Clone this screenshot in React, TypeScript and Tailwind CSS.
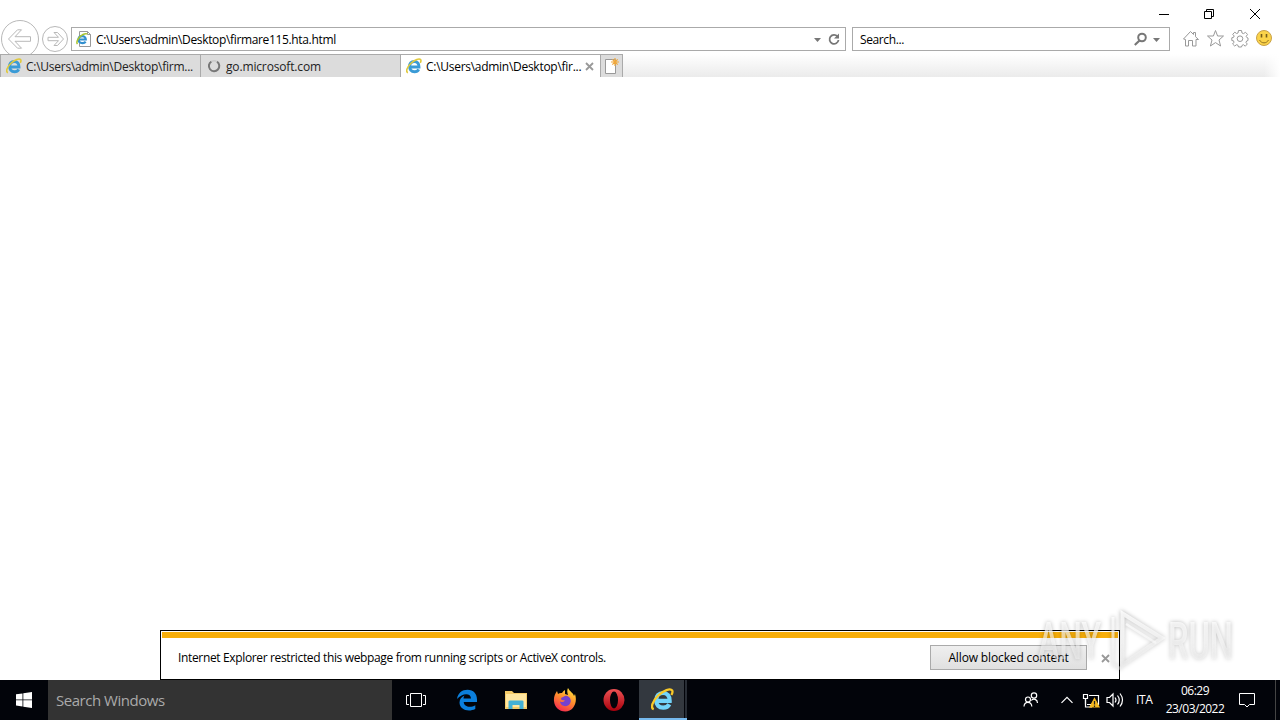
function IeLogo({ size = 16, light = false }: { size?: number; light?: boolean }) {
  return (
    <svg width={size} height={size} viewBox="0 0 16 16" fill="none" className="shrink-0">
      <path d="M3.900 9H13C13.100 5.600 11.300 3.500 8.400 3.500C5.500 3.500 3.600 5.500 3.600 8.600C3.600 11.800 5.500 13.700 8.500 13.700C10.500 13.700 12 12.800 12.700 11.300" stroke={light ? '#72d4fa' : '#3a9bd6'} strokeWidth="2.9" />
      <path d="M1.900 14.800C-.6 13.800 1.100 9 5 5.200C8.700 1.600 13.500-.1 14.700 1.700C15.200 2.500 14.900 3.700 14.200 4.900" stroke={light ? '#f9c928' : '#e0c93c'} strokeWidth="1.6" />
    </svg>
  );
}

function WindowControls() {
  return (
    <div className="flex h-[27px] justify-end">
      <svg width="140" height="27" viewBox="0 0 140 27" fill="none" stroke="#000" strokeWidth="1">
        <path d="M19 14.5H29" />
        <path d="M64.5 11.5H71.5V18.5H64.5ZM66.5 11V9.5H73.5V16.5H72" />
        <path d="M110 9L120 19M120 9L110 19" />
      </svg>
    </div>
  );
}

function AddressRow() {
  return (
    <div className="flex h-[27px] items-start">
      <svg width="71" height="34" viewBox="0 20 71 34" fill="none" stroke="#b8b8b8" className="-mt-[7px] shrink-0">
        <circle cx="20" cy="39" r="18.5" />
        <path d="M8.500 39L17.500 29.800H21.500L15 36.700H30.500V41.300H15L21.500 48.200H17.500Z" />
        <circle cx="55" cy="39" r="12.5" />
        <path d="M63.500 39L57.500 32.500H54L58.500 37.300H48V40.700H58.500L54 45.500H57.500Z" />
      </svg>
      <div className="flex h-[24px] w-[775px] shrink-0 items-center border border-[#aaa] bg-white pl-[4px]">
        <svg width="16" height="18" viewBox="0 0 16 18" fill="none" className="mr-[4px] shrink-0">
          <path d="M3.500 1.500H11.500L14.500 4.500V16.500H3.500Z" fill="#fff" stroke="#999" />
          <path d="M11.500 1.500V4.500H14.500" stroke="#999" />
          <path d="M2.500 9.500H9.800C9.800 5 2.700 5 2.500 9.500C2.500 13.800 8 13.800 9.700 11.800" stroke="#3390cf" strokeWidth="2.200" />
          <path d="M1.500 14C-.5 12 3 6.500 7 4.500C9 3.500 10.800 3.300 11 4.500" stroke="#a9c32f" strokeWidth="1.500" />
        </svg>
        <span className="flex-1 pt-[2px] text-[12px] tracking-[-0.345px]">C:\Users\admin\Desktop\firmare115.hta.html</span>
        <svg width="32" height="22" viewBox="813 28 32 22" fill="none">
          <path d="M814 38H821L817.500 42Z" fill="#777" />
          <path d="M837.500 36.500A4.500 4.500 0 1 0 838.500 40" stroke="#777" strokeWidth="1.800" />
          <path d="M839 33.500V38.500H834Z" fill="#777" />
        </svg>
      </div>
      <div className="ml-[6px] flex h-[24px] w-[318px] shrink-0 items-center border border-[#aaa] bg-white pl-[7px]">
        <span className="flex-1 pt-[2px] text-[12px] tracking-[-0.38px]">Search...</span>
        <svg width="36" height="22" viewBox="1133 28 36 22" fill="none">
          <circle cx="1142" cy="37.500" r="3.800" stroke="#777" strokeWidth="2" />
          <path d="M1139.500 40.500L1134.800 45" stroke="#777" strokeWidth="2.200" />
          <path d="M1153 38H1160L1156.500 42Z" fill="#777" />
        </svg>
      </div>
      <svg width="110" height="24" viewBox="1170 27 110 24" fill="none" stroke="#999" className="shrink-0">
        <path d="M1183.500 39L1190.500 31.500L1193.500 34.500V32.500H1195.500V36.700L1198.500 39.500H1196V46H1192.500V40.500H1188.500V46H1185.500V39.500Z" />
        <path d="M1215.500 30.500L1217.600 36H1223.500L1219 40L1220.600 46L1215.500 42.600L1210.400 46L1212 40L1207.500 36H1213.400Z" />
        <path d="M1238.500 30.500H1241.500L1242 33L1243.500 33.600L1245.500 32.300L1247.500 34.400L1246.200 36.400L1246.800 37.500L1248 38V40.500L1246.600 41L1246 42.500L1247.300 44L1245.300 46.200L1243.400 44.700L1242 45.400L1241.500 47H1238.500L1238 45.300L1236.600 44.700L1234.700 46L1232.600 44L1234 42.200L1233.500 40.800L1231.800 40.500V37.800L1233.600 37.300L1234.200 36L1232.700 34.300L1234.800 32.200L1236.600 33.500L1238 33Z" />
        <circle cx="1240" cy="38.700" r="2.800" />
        <circle cx="1264" cy="38" r="7.500" fill="#fbd34a" stroke="#c9a24a" />
        <path d="M1261.500 34V37.500M1266.500 34V37.500" stroke="#755c18" strokeWidth="1.600" />
        <path d="M1259.500 40C1261.500 43.800 1266.500 43.800 1268.500 40" stroke="#94731f" />
      </svg>
    </div>
  );
}

function TabBar() {
  return (
    <div className="flex h-[23px] bg-gradient-to-b from-white to-[#ebebeb] text-[12px] text-[#222]">
      <div className="flex w-[201px] items-center border border-b-0 border-[#aaa] bg-[#dcdcdc] pl-[5px]">
        <IeLogo />
        <span className="ml-[4px] whitespace-nowrap pt-[2px] tracking-[-0.25px]">C:\Users\admin\Desktop\firm...</span>
      </div>
      <div className="flex w-[199px] items-center border-t border-[#aaa] bg-[#dcdcdc] pl-[5px]">
        <svg width="15" height="15" viewBox="0 0 15 15" fill="none">
          <path d="M5.500 2.500A5.200 5.200 0 1 0 11 2.700" stroke="#777" strokeWidth="2" />
          <path d="M5.500 2.500A5.200 5.200 0 0 1 11 2.700" stroke="#cacaca" strokeWidth="1.500" />
        </svg>
        <span className="ml-[5px] pt-[2px] tracking-[-0.15px]">go.microsoft.com</span>
      </div>
      <div className="flex w-[201px] items-center border border-b-0 border-[#aaa] bg-white pl-[5px] text-black">
        <IeLogo />
        <span className="ml-[4px] w-[159px] whitespace-nowrap pt-[2px] tracking-[-0.28px]">C:\Users\admin\Desktop\fir...</span>
        <svg width="9" height="9" viewBox="0 0 9 9" stroke="#999" strokeWidth="1.800">
          <path d="M1 1L8 8M8 1L1 8" />
        </svg>
      </div>
      <div className="flex w-[22px] items-center border border-b-0 border-l-0 border-[#aaa] bg-[#dcdcdc] pl-[3px]">
        <svg width="16" height="18" viewBox="0 0 16 18" fill="none">
          <path d="M1.500 2.500H11.500V16.500H1.500Z" fill="#fff" stroke="#999" />
          <path d="M11 1V9M7 5H15M8.300 2.300L13.700 7.700M13.700 2.300L8.300 7.700" stroke="#f0a83c" strokeWidth="1.200" />
        </svg>
      </div>
      <div className="ml-auto w-4 bg-gradient-to-r from-transparent to-white" />
    </div>
  );
}

function NotificationBar() {
  return (
    <div className="mx-auto flex h-[50px] w-[960px] flex-col border border-black bg-white pt-px">
      <div className="mx-px h-[6px] shrink-0 bg-[#f7ae0a]" />
      <div className="flex flex-1 items-center pl-[17px] text-[12px]">
        <span className="w-[752px] pb-px tracking-[-0.35px]">Internet Explorer restricted this webpage from running scripts or ActiveX controls.</span>
        <button className="-mt-[3px] h-[25px] w-[157px] border border-[#aaa] bg-gradient-to-b from-[#efefef] to-[#e0e0e0] pt-[2px] tracking-[-0.14px]">Allow blocked content</button>
        <svg width="9" height="9" viewBox="0 0 9 9" stroke="#999" strokeWidth="1.800" className="ml-[14px]">
          <path d="M1 1L8 8M8 1L1 8" />
        </svg>
      </div>
    </div>
  );
}

function Watermark() {
  return (
    <svg width="215" height="76" viewBox="1030 604 215 76" className="absolute left-[1030px] top-[604px]" style={{ filter: 'drop-shadow(0 0 2px rgba(0,0,0,.38))' }}>
      <defs>
        <linearGradient id="fade" gradientUnits="userSpaceOnUse" x1="0" y1="610" x2="0" y2="672">
          <stop stopColor="#fff" stopOpacity=".85" />
          <stop offset=".5" stopColor="#fff" stopOpacity=".55" />
          <stop offset="1" stopColor="#eee" stopOpacity=".4" />
        </linearGradient>
      </defs>
      <g fill="url(#fade)" fontSize="51" fontWeight="500" fontFamily="Roboto">
        <text x="1038" y="659" textLength="63" lengthAdjust="spacingAndGlyphs">ANY</text>
        <text x="1168" y="659" textLength="65" lengthAdjust="spacingAndGlyphs">RUN</text>
      </g>
      <g fill="none" stroke="url(#fade)" strokeWidth="4">
        <path d="M1122.500 613.500L1162 638L1122.500 665Z" />
        <path d="M1113 617V664L1121 669" strokeWidth="3" />
        <path d="M1126 624L1156 643" strokeWidth="2.500" />
      </g>
    </svg>
  );
}

function Taskbar() {
  return (
    <footer className="flex h-[40px] bg-[#02040a] text-white">
      <div className="flex w-[48px] items-center justify-center">
        <svg width="16" height="16" viewBox="0 0 16 16" fill="#fff">
          <path d="M0 2.300L6.500 1.400V7.500H0ZM7.300 1.300L16 0V7.500H7.300ZM0 8.300H6.500V14.500L0 13.600ZM7.300 8.300H16V16L7.300 14.700Z" />
        </svg>
      </div>
      <div className="flex w-[344px] items-center bg-[#333] pl-[8px] text-[15px] text-[#aaa]">
        <span className="tracking-[-0.47px]">Search Windows</span>
      </div>
      <div className="flex w-[49px] items-center pl-[14px]">
        <svg width="20" height="14" viewBox="0 0 20 14" fill="none" stroke="#fff">
          <path d="M4.500.5H15.500V13.500H4.500ZM3 2.500H.5V11.500H3M17 2.500H19.500V11.500H17" />
        </svg>
      </div>
      <div className="flex w-[51px] items-center justify-center">
        <svg width="22" height="22" viewBox="0 0 22 22">
          <path d="M1 10C2 4 6 .8 11.500.8C17.500.8 21 5 21 10.500V13H7.700C8 18 14.500 19 19.300 16.200V20C12 23.500 3.500 20.500 3.500 13.500C3.500 10.300 5.500 7.800 8.500 6.600C7.800 7.500 7.500 8.400 7.500 9.500H15C15 3.800 6.500 3.500 1 10Z" fill="#0b7fdc" />
        </svg>
      </div>
      <div className="flex w-[47px] items-center justify-center">
        <svg width="22" height="20" viewBox="0 0 22 20">
          <path d="M0 1H7L9 3H22V19H0Z" fill="#f5cb68" />
          <path d="M1 4H21V17H1Z" fill="#ffe6a0" />
          <path d="M3.500 19V11.500Q3.500 10.500 5 10.500H17Q18.500 10.500 18.500 11.500V19H14.500V15H7.500V19Z" fill="#44b1d5" />
        </svg>
      </div>
      <div className="flex w-[50px] items-center justify-center pl-px">
        <svg width="24" height="24" viewBox="0 0 24 24">
          <defs>
            <linearGradient id="fox" x1=".8" y1="0" x2=".3" y2="1">
              <stop stopColor="#ffe83f" />
              <stop offset=".45" stopColor="#ff932c" />
              <stop offset="1" stopColor="#f4274e" />
            </linearGradient>
          </defs>
          <path d="M1 13C.6 9 2 6 4 3L5 6Q6.500 4.700 9 5Q10 3 12 2V6L15 7Q13.500 3 15 0C17 4 20 4.500 21 8L22 6C25 15 20 23.500 12.300 23.500C6 23.500 1.500 19 1 13Z" fill="url(#fox)" />
          <path d="M8 10L11 8.500Q13 7 16 9Q19 12 17 15.500C14.500 20 7.500 18.500 7 13.500Q10 15 12 12.500L8.500 12Z" fill="#7441ce" />
        </svg>
      </div>
      <div className="flex w-[50px] items-center justify-center pr-px">
        <svg width="22" height="22" viewBox="0 0 22 22">
          <defs>
            <linearGradient id="opera" x2="0" y2="1">
              <stop stopColor="#ed5254" />
              <stop offset="1" stopColor="#a7000c" />
            </linearGradient>
          </defs>
          <ellipse cx="11" cy="11" rx="10.500" ry="11" fill="url(#opera)" />
          <ellipse cx="11" cy="11" rx="4" ry="8.500" fill="#02040a" />
        </svg>
      </div>
      <div className="flex w-[48px] border-b-2 border-[#76b9ed]">
        <div className="flex w-[45px] items-center justify-center bg-[#33383f] pl-[2px]">
          <IeLogo size={23} light />
        </div>
        <div className="ml-px flex-1 bg-[#282d35]" />
      </div>
      <svg width="126" height="40" viewBox="1010 680 126 40" fill="none" stroke="#fff" strokeWidth="1.200" className="ml-auto">
        <circle cx="1034" cy="695.500" r="2.700" />
        <circle cx="1028" cy="699.500" r="2.500" />
        <path d="M1024 706.500C1024.300 701 1031.500 701 1031.800 706.500M1031.300 700.500C1033.500 697.700 1037.500 699.500 1037.500 703" />
        <path d="M1061.500 702.800L1067 697.300L1072.500 702.800" />
        <path d="M1089 695.500H1098.500V704.500H1087M1085.500 704.500V698" />
        <path d="M1083.500 694.500H1087.500V698.500H1083.500ZM1085.500 698V707H1092" />
        <path d="M1094.500 698.500L1099 707H1090Z" fill="#f5b921" stroke="#f5b921" />
        <path d="M1094.500 701V704.500M1094.500 705.500V707" stroke="#222" />
        <path d="M1107 697.500H1109.500L1113 694V706L1109.500 702.500H1107ZM1115 697.500Q1117 700 1115 702.500M1117.500 695.500Q1121 700 1117.500 704.500M1120 693.500Q1125 700 1120 706.500" />
      </svg>
      <span className="w-[26px] text-[12px] leading-[40px] tracking-[-0.3px]">ITA</span>
      <div className="w-[66px] whitespace-nowrap pt-[2px] text-center text-[12px] leading-[18px] tracking-[-0.5px]">
        <div>06:29</div>
        <div>23/03/2022</div>
      </div>
      <div className="flex w-[48px] items-center border-r border-[#444] pl-[11px]">
        <svg width="17" height="17" viewBox="0 0 17 17" fill="none" stroke="#fff">
          <path d="M.5 1.500H15.500V12.500H10.500L8 15L5.500 12.500H.5Z" />
        </svg>
      </div>
      <div className="w-[4px]" />
    </footer>
  );
}

export default function App() {
  return (
    <div className="relative flex h-[720px] w-[1280px] flex-col overflow-hidden bg-white font-['Open_Sans','Noto_Sans',sans-serif] text-black">
      <header>
        <WindowControls />
        <AddressRow />
        <TabBar />
      </header>
      <main className="flex flex-1 flex-col justify-end">
        <NotificationBar />
      </main>
      <Taskbar />
      <Watermark />
    </div>
  );
}
